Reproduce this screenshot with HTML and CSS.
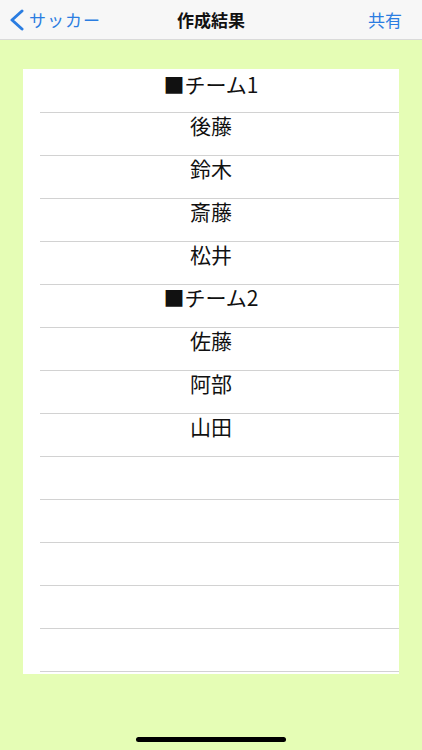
FILE: index.html
```html
<!DOCTYPE html>
<html lang="ja">
<head>
    <meta charset="UTF-8">
    <meta name="viewport" content="width=device-width, initial-scale=1.0">
    <title>作成結果</title>
    <link rel="stylesheet" href="styles.css">
</head>
<body>
    <!-- ナビゲーションバー -->
    <header class="nav-bar">
        <a class="nav-back" href="#">
            <svg class="chevron" width="16" height="22" viewBox="0 0 16 22">
                <path d="M13 2 L3 11 L13 20" fill="none" stroke="currentColor" stroke-width="3" stroke-linecap="round" stroke-linejoin="round"/>
            </svg>
            <span>サッカー</span>
        </a>
        <div class="nav-title">作成結果</div>
        <a class="nav-action" href="#">共有</a>
    </header>

    <!-- 結果リスト -->
    <main class="content">
        <ul class="result-list">
            <li class="row">■チーム1</li>
            <li class="row">後藤</li>
            <li class="row">鈴木</li>
            <li class="row">斎藤</li>
            <li class="row">松井</li>
            <li class="row">■チーム2</li>
            <li class="row">佐藤</li>
            <li class="row">阿部</li>
            <li class="row">山田</li>
            <li class="row"></li>
            <li class="row"></li>
            <li class="row"></li>
            <li class="row"></li>
            <li class="row"></li>
        </ul>
    </main>

    <div class="home-indicator"></div>
</body>
</html>
```

FILE: styles.css
```css
:root {
    --bg-color: #e5fdb5;
    --nav-bg: #f7f7f7;
    --nav-border: #dadada;
    --tint: #2b7de1;
    --text-color: #111111;
    --line-color: #d2d2d2;
}

* {
    margin: 0;
    padding: 0;
    box-sizing: border-box;
}

body {
    font-family: "Noto Sans CJK JP", "Noto Sans", sans-serif;
    background-color: var(--bg-color);
    color: var(--text-color);
    width: 422px;
    height: 750px;
    overflow: hidden;
    display: flex;
    flex-direction: column;
}

.nav-bar {
    height: 40px;
    background-color: var(--nav-bg);
    border-bottom: 1px solid var(--nav-border);
    display: flex;
    align-items: center;
    justify-content: space-between;
    padding: 0 20px 0 9px;
    position: relative;
}

.nav-back,
.nav-action {
    color: var(--tint);
    text-decoration: none;
    font-size: 17px;
}

.nav-back {
    display: flex;
    align-items: center;
    gap: 4px;
}

.nav-back span {
    letter-spacing: 1px;
}

.chevron {
    display: block;
}

.nav-title {
    position: absolute;
    left: 0;
    right: 0;
    text-align: center;
    font-size: 17px;
    font-weight: 700;
    pointer-events: none;
}

.content {
    padding: 29px 23px 0 23px;
}

.result-list {
    list-style: none;
    background-color: #ffffff;
    padding-bottom: 2px;
}

.row {
    height: 43px;
    line-height: 25px;
    font-size: 21px;
    text-align: center;
    margin-left: 17px;
    padding-right: 17px;
    border-bottom: 1px solid var(--line-color);
}

.row:first-child {
    height: 44px;
    padding-top: 3px;
}

.home-indicator {
    position: absolute;
    left: 136px;
    top: 737px;
    width: 150px;
    height: 5px;
    border-radius: 3px;
    background-color: #000000;
}
```
